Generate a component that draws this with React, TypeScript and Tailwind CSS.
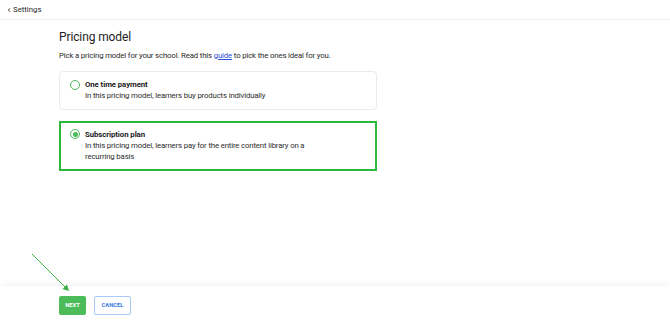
import { ChevronLeft } from "lucide-react";

function Radio({ checked }: { checked: boolean }) {
  return (
    <span className="mt-[0.5px] flex h-[10px] w-[10px] shrink-0 items-center justify-center rounded-full border-[1.5px] border-[#4cbb5a] bg-white">
      {checked && <span className="h-[5px] w-[5px] rounded-full bg-[#4cbb5a]" />}
    </span>
  );
}

function Option({
  title,
  desc,
  checked,
}: {
  title: string;
  desc: string;
  checked: boolean;
}) {
  return (
    <div
      className={
        checked
          ? "flex gap-[5px] border-2 border-[#2db83d] bg-white pl-[9px] pr-4 pt-[6px] pb-[6px]"
          : "flex gap-[5px] rounded border border-[#ebebeb] bg-white pl-[10px] pr-4 pt-[7px] pb-[7px]"
      }
    >
      <Radio checked={checked} />
      <div className="w-[222px]">
        <div className="text-[7.8px] font-bold leading-[11px] tracking-[-0.01em] text-[#1a1a1a]">{title}</div>
        <div className="text-[7.8px] leading-[11.5px] tracking-[-0.02em] text-[#2e2e2e]">{desc}</div>
      </div>
    </div>
  );
}

export default function App() {
  return (
    <div className="relative flex h-[325px] w-[670px] flex-col bg-white font-['Roboto',sans-serif]">
      <div className="flex h-[20px] items-center border-b border-[#f0f0f0] pl-[6px] text-[7.8px] text-[#2a2a2a]">
        <ChevronLeft size={6} strokeWidth={3.5} />
        <span className="ml-[1px]">Settings</span>
      </div>

      <div className="flex-1 pl-[59px] pt-[10px]">
        <h1 className="text-[12px] leading-[14px] tracking-[-0.01em] text-[#222]">Pricing model</h1>
        <p className="mt-[5.5px] text-[7.8px] leading-[11px] tracking-[-0.02em] text-[#2a2a2a]">
          Pick a pricing model for your school. Read this{" "}
          <a className="text-[#2b4fd9] underline">guide</a> to pick the ones ideal for you.
        </p>
        <div className="mt-[10.5px] flex w-[318px] flex-col gap-[11px]">
          <Option
            title="One time payment"
            desc="In this pricing model, learners buy products individually"
            checked={false}
          />
          <Option
            title="Subscription plan"
            desc="In this pricing model, learners pay for the entire content library on a recurring basis"
            checked={true}
          />
        </div>
      </div>

      <div className="flex h-[39px] items-center gap-[8px] pl-[59px] shadow-[0_-3px_6px_rgba(0,0,0,0.04)]">
        <button className="flex h-[19px] w-[27px] items-center justify-center rounded-[2px] bg-[#4cbb5a] text-[5.8px] font-bold text-white">
          NEXT
        </button>
        <button className="flex h-[19px] w-[37px] items-center justify-center rounded-[2px] border border-[#a9c8f5] bg-white text-[5.8px] font-bold text-[#3b78e0]">
          CANCEL
        </button>
      </div>

      <svg className="absolute left-[30px] top-[252px]" width="42" height="42" viewBox="0 0 42 42">
        <line x1="2" y1="2" x2="35" y2="35" stroke="#3cb043" strokeWidth="1" />
        <polygon points="39,39 32.5,37 37,32.5" fill="#3cb043" />
      </svg>
    </div>
  );
}
